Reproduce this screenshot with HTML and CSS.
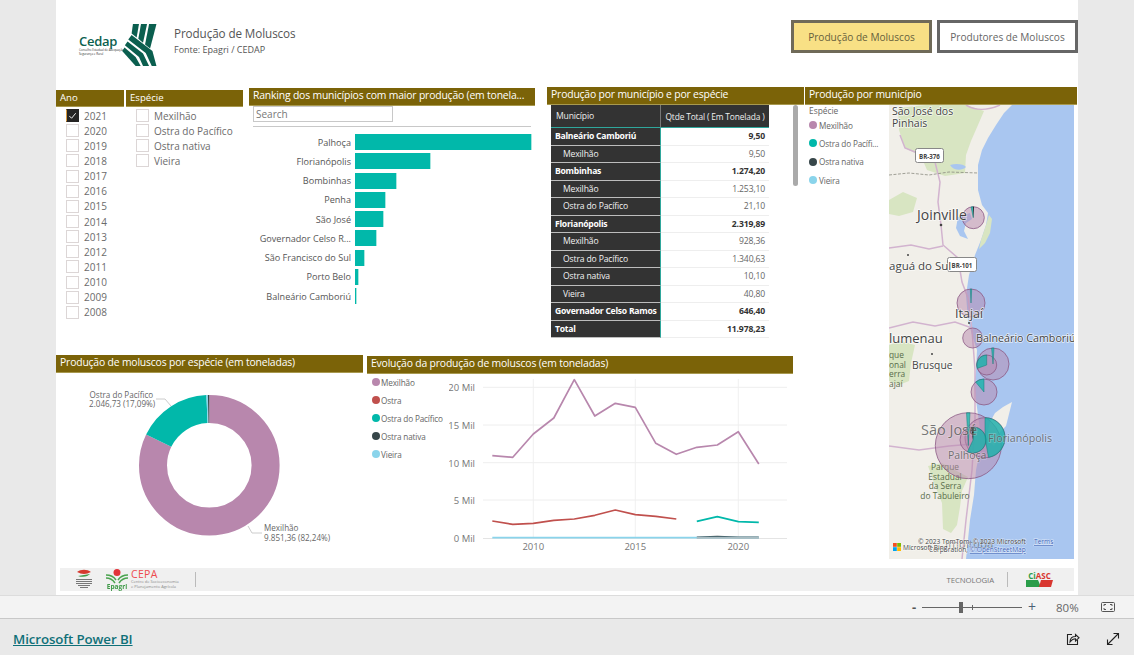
FILE: index.html
```html
<!DOCTYPE html>
<html lang="pt-BR">
<head>
<meta charset="utf-8">
<title>Produção de Moluscos</title>
<link rel="stylesheet" href="styles.css">
</head>
<body>
<main class="stage">
  <div class="canvas">
    <header class="head">
      <div class="brand">
        <div class="brand-text">
          <span class="brand-name">Cedap</span>
          <span class="brand-sub">Conselho Estadual de Adequação<br>Segurança e Rural</span>
        </div>
        <svg class="brand-mark" viewBox="200 72 103 125">
          <g fill="#0b5f4f">
            <path d="M232 72h18l-7 40-15-12z"/>
            <path d="M256 72h18l-12 56-14-12z"/>
            <path d="M280 72h22l-19 73-15-12z"/>
            <path d="M218 118l10-13 62 47 12 45h-14l-18-39z"/>
            <path d="M208 135l8-11 46 36 18 37h-18l-12-27z"/>
            <path d="M200 152l7-10 33 28 15 27h-15z"/>
          </g>
        </svg>
      </div>
      <div class="head-titles">
        <div class="head-title">Produção de Moluscos</div>
        <div class="head-source">Fonte: Epagri / CEDAP</div>
      </div>
      <nav class="tabs">
        <div class="tab tab-active">Produção de Moluscos</div>
        <div class="tab">Produtores de Moluscos</div>
      </nav>
    </header>

    <div class="report">
      <div class="report-left">
        <section class="row-top">
          <div class="slicer slicer-ano">
            <h2 class="bar bar-small">Ano</h2>
            <ul class="checks">
              <li class="check-item"><span class="box box-on"><svg viewBox="0 0 12 12"><path d="M2.5 6.5l2.500 2.500 4.500-5.500" fill="none" stroke="#fff" stroke-width="1"/></svg></span>2021</li>
              <li class="check-item"><span class="box"></span>2020</li>
              <li class="check-item"><span class="box"></span>2019</li>
              <li class="check-item"><span class="box"></span>2018</li>
              <li class="check-item"><span class="box"></span>2017</li>
              <li class="check-item"><span class="box"></span>2016</li>
              <li class="check-item"><span class="box"></span>2015</li>
              <li class="check-item"><span class="box"></span>2014</li>
              <li class="check-item"><span class="box"></span>2013</li>
              <li class="check-item"><span class="box"></span>2012</li>
              <li class="check-item"><span class="box"></span>2011</li>
              <li class="check-item"><span class="box"></span>2010</li>
              <li class="check-item"><span class="box"></span>2009</li>
              <li class="check-item"><span class="box"></span>2008</li>
            </ul>
          </div>
          <div class="slicer slicer-especie">
            <h2 class="bar bar-small">Espécie</h2>
            <ul class="checks">
              <li class="check-item"><span class="box"></span>Mexilhão</li>
              <li class="check-item"><span class="box"></span>Ostra do Pacífico</li>
              <li class="check-item"><span class="box"></span>Ostra nativa</li>
              <li class="check-item"><span class="box"></span>Vieira</li>
            </ul>
          </div>
          <div class="ranking">
            <h2 class="bar">Ranking dos municípios com maior produção (em tonela...</h2>
            <div class="search">Search</div>
            <div class="rule"></div>
            <div class="rank-rows">
              <div class="rank-row"><span class="rank-name">Palhoça</span><span class="rank-bar" style="width:176px"></span></div>
              <div class="rank-row"><span class="rank-name">Florianópolis</span><span class="rank-bar" style="width:75px"></span></div>
              <div class="rank-row"><span class="rank-name">Bombinhas</span><span class="rank-bar" style="width:41px"></span></div>
              <div class="rank-row"><span class="rank-name">Penha</span><span class="rank-bar" style="width:30px"></span></div>
              <div class="rank-row"><span class="rank-name">São José</span><span class="rank-bar" style="width:27.5px"></span></div>
              <div class="rank-row"><span class="rank-name">Governador Celso R...</span><span class="rank-bar" style="width:21px"></span></div>
              <div class="rank-row"><span class="rank-name">São Francisco do Sul</span><span class="rank-bar" style="width:9px"></span></div>
              <div class="rank-row"><span class="rank-name">Porto Belo</span><span class="rank-bar" style="width:3px"></span></div>
              <div class="rank-row"><span class="rank-name">Balneário Camboriú</span><span class="rank-bar" style="width:1px"></span></div>
            </div>
          </div>
          <div class="matrix-wrap">
            <h2 class="bar">Produção por município e por espécie</h2>
            <div class="matrix-body">
              <div class="matrix">
                <div class="mh mh-left">Município</div><div class="mh mh-right">Qtde Total ( Em Tonelada )</div>
                <div class="ml ml-b">Balneário Camboriú</div><div class="mv mv-b">9,50</div>
                <div class="ml">Mexilhão</div><div class="mv">9,50</div>
                <div class="ml ml-b">Bombinhas</div><div class="mv mv-b">1.274,20</div>
                <div class="ml">Mexilhão</div><div class="mv">1.253,10</div>
                <div class="ml">Ostra do Pacífico</div><div class="mv">21,10</div>
                <div class="ml ml-b">Florianópolis</div><div class="mv mv-b">2.319,89</div>
                <div class="ml">Mexilhão</div><div class="mv">928,36</div>
                <div class="ml">Ostra do Pacífico</div><div class="mv">1.340,63</div>
                <div class="ml">Ostra nativa</div><div class="mv">10,10</div>
                <div class="ml">Vieira</div><div class="mv">40,80</div>
                <div class="ml ml-b">Governador Celso Ramos</div><div class="mv mv-b">646,40</div>
                <div class="ml ml-b">Total</div><div class="mv mv-b">11.978,23</div>
              </div>
              <div class="scroll"></div>
            </div>
          </div>
        </section>

        <section class="row-bottom">
          <div class="donut-card">
            <h2 class="bar">Produção de moluscos por espécie (em toneladas)</h2>
            <svg class="donut" viewBox="56 373 307 187">
              <g fill="none" stroke-width="28" transform="rotate(-90 209.3 466.3)">
                <circle cx="209.3" cy="466.3" r="56.3" pathLength="100" stroke="#b887ad" stroke-dasharray="82.24 100"/>
                <circle cx="209.3" cy="466.3" r="56.3" pathLength="100" stroke="#01b8aa" stroke-dasharray="17.09 100" stroke-dashoffset="-82.24"/>
                <circle cx="209.3" cy="466.3" r="56.3" pathLength="100" stroke="#8ad4eb" stroke-dasharray="0.35 100" stroke-dashoffset="-99.33"/>
                <circle cx="209.3" cy="466.3" r="56.3" pathLength="100" stroke="#374649" stroke-dasharray="0.32 100" stroke-dashoffset="-99.68"/>
              </g>
              <path class="leader" d="M156 400h9l6 7"/>
              <path class="leader" d="M248 527l4 7h10"/>
              <text class="dl" x="89.5" y="398.500">Ostra do Pacífico</text>
              <text class="dl" x="89" y="407.500">2.046,73 (17,09%)</text>
              <text class="dl" x="264" y="531.500">Mexilhão</text>
              <text class="dl" x="264" y="541.500">9.851,36 (82,24%)</text>
            </svg>
          </div>
          <div class="line-card">
            <h2 class="bar">Evolução da produção de moluscos (em toneladas)</h2>
            <div class="line-body">
              <ul class="legend legend-line">
                <li class="legend-item"><span class="dot dot-mex"></span>Mexilhão</li>
                <li class="legend-item"><span class="dot dot-ostra"></span>Ostra</li>
                <li class="legend-item"><span class="dot dot-pac"></span>Ostra do Pacífico</li>
                <li class="legend-item"><span class="dot dot-nat"></span>Ostra nativa</li>
                <li class="legend-item"><span class="dot dot-vie"></span>Vieira</li>
              </ul>
              <svg class="line-chart" viewBox="449 374 344 186">
                <g class="grid-v">
                  <path d="M533.3 380V539M635.3 380V539M738.3 380V539"/>
                </g>
                <g class="grid-h">
                  <path d="M483 388.3H787M483 426H787M483 463.7H787M483 501H787"/>
                </g>
                <path class="axis0" d="M483 539.5H787"/>
                <g class="ytick">
                  <text x="475" y="392">20 Mil</text>
                  <text x="475" y="430">15 Mil</text>
                  <text x="475" y="467.5">10 Mil</text>
                  <text x="475" y="505">5 Mil</text>
                  <text x="475" y="542.5">0 Mil</text>
                </g>
                <g class="xtick">
                  <text x="533.3" y="551">2010</text>
                  <text x="635.3" y="551">2015</text>
                  <text x="738.3" y="551">2020</text>
                </g>
                <polyline class="ln ln-mex" points="492.3,456.7 512.8,458.3 533.3,435 553.8,419 574.3,380.7 594.8,417 615.3,404.3 635.3,408.3 655.8,444.3 676.3,455.3 696.8,448.3 717.3,446 738.3,432.7 758.8,465"/>
                <polyline class="ln ln-ostra" points="492.3,522 512.8,525.3 533.3,524.3 553.8,521.3 574.3,520 594.8,516.3 615.3,511 635.3,515.7 655.8,517.3 676.3,520"/>
                <polyline class="ln ln-pac" points="696.8,522.3 717.3,517.7 738.3,522.7 758.8,523.3"/>
                <polyline class="ln ln-nat" points="696.8,538.3 717.3,537.6 738.3,538.3 758.8,538.4"/>
                <polyline class="ln ln-vie" points="492.3,538.7 758.8,538.7"/>
                <polyline class="ln ln-mix" points="696.8,538.8 758.8,538.8"/>
              </svg>
            </div>
          </div>
        </section>
      </div>

      <section class="map-card">
        <h2 class="bar">Produção por município</h2>
        <div class="map-body">
          <ul class="legend legend-map">
            <li class="legend-head">Espécie</li>
            <li class="legend-item"><span class="dot dot-mex"></span>Mexilhão</li>
            <li class="legend-item"><span class="dot dot-pac"></span>Ostra do Pacífi...</li>
            <li class="legend-item"><span class="dot dot-nat"></span>Ostra nativa</li>
            <li class="legend-item"><span class="dot dot-vie"></span>Vieira</li>
          </ul>
          <svg class="map" viewBox="889 105 185 454">
            <rect x="889" y="105" width="185" height="454" fill="#f1efe9"/>
            <path fill="#a9c6f0" d="M1012 105L1004 113L996 125L988 138L982 150L978 165L978 190L982 205L988 213L986 225L981 240L975 255L969 275L966 295L968 320L972 335L977 350L976 370L974 385L976 400L980 430L980 450L976 470L974 495L970 520L966 559H1074V105Z"/>
            <g class="land-green">
              <path d="M898 108l28-3 40 0 18 6-6 14-7 16-5 14-1 18-20 3-18-6-6-14-16-8-6-18z"/>
              <path d="M889 200l14-8 14 6-4 14-14 4-10-2z"/>
              <path d="M981 240l5-15 3-10 3 4-2 14-5 10-6 6z"/>
              <path d="M889 345l12-4 14 4-4 18-2 18-10 4-10-4z"/>
              <path d="M928 466l14-3 26 14-6 14-2 16-3 18-6 8-8-4-1-26-8-20z"/>
            </g>
            <path fill="#f1efe9" d="M990 422l5-9 8-6 9-5-3 12-3 12-6 6-6 14-4-4-2-12z"/>
            <g fill="#a9c6f0">
              <path d="M958 217l12-4 2 6-6 4-2 8 4 8-8-3-4-8z"/>
              <path d="M950 165c6-2 14-1 16 2-4 4-12 4-16-2z"/>
            </g>
            <g class="road">
              <path d="M900 135l5 13 10 4 20 10 5 20-2 20 3 23 2 20 15 13 4 24 6 16 4 32 3 40 0 50-3 50-6 50-4 39"/>
              <path d="M889 248l22-3 18 4 14-3"/>
              <path d="M889 328l24-6 22 4 20-4 17 6"/>
              <path d="M889 446l30 4 30-4 24-2"/>
              <path d="M1000 105c-14 6-24 6-34 0"/>
            </g>
            <path class="border" d="M889 175l20-2 20 2 20-3 29 1"/>
            <g class="pin" fill="#444">
              <circle cx="941" cy="225" r="1.3"/>
              <circle cx="908" cy="255" r="1"/>
              <circle cx="969" cy="323" r="1"/>
              <circle cx="932" cy="354" r="1"/>
            </g>
            <g class="park">
              <text x="889" y="358">que</text>
              <text x="889" y="368">onal</text>
              <text x="889" y="377">erra</text>
              <text x="889" y="387">ajaí</text>
              <text class="mid" x="945" y="470">Parque</text>
              <text class="mid" x="945" y="480">Estadual</text>
              <text class="mid" x="945" y="489">da Serra</text>
              <text class="mid" x="945" y="499">do Tabuleiro</text>
            </g>
            <g class="shield">
              <rect x="915.5" y="148.5" width="28" height="14" rx="2"/>
              <text x="929.5" y="158.5">BR-376</text>
              <rect x="947.5" y="257.5" width="29" height="14" rx="2"/>
              <text x="962" y="267.5">BR-101</text>
            </g>
            <g class="bubble">
              <circle cx="973.3" cy="217.7" r="11"/>
              <circle cx="971" cy="303" r="14"/>
              <circle cx="972.7" cy="338" r="10"/>
              <circle cx="993" cy="364" r="16"/>
              <circle cx="986.7" cy="365" r="10"/>
              <circle cx="984" cy="392" r="13"/>
              <circle cx="968.3" cy="445.7" r="33"/>
              <circle cx="985" cy="437.7" r="20"/>
              <circle cx="973" cy="440" r="13"/>
            </g>
            <g class="wedge">
              <path d="M973.3 217.7L971 206.9A11 11 0 0 1 973.3 206.7Z"/>
              <path d="M971 303L970.3 289L971.7 289Z"/>
              <path d="M993 364L991.6 348L994 348Z"/>
              <path d="M986.7 365L977.3 368.4A10 10 0 0 1 986.7 355Z"/>
              <path d="M984 392L975.6 382A13 13 0 0 1 984 379Z"/>
              <path d="M968.3 445.7L966.5 412.8L970 412.8Z"/>
              <path d="M985 437.7L985 417.7A20 20 0 0 1 988.500 457.4Z"/>
              <path d="M973 440L973 427A13 13 0 1 1 967.5 451.8Z"/>
            </g>
            <g class="wedge-dark">
              <path d="M973.3 217.7L973 206.7L974 206.7Z"/>
              <path d="M973 440L971 427L973.9 427Z"/>
            </g>
            <g class="city">
              <text x="892" y="115" class="c11">São José dos</text>
              <text x="892" y="127" class="c11">Pinhais</text>
              <text x="917" y="220" class="c14">Joinville</text>
              <text x="889" y="270" class="c12">aguá do Sul</text>
              <text x="955" y="318" class="c13">Itajaí</text>
              <text x="889" y="343" class="c13b">lumenau</text>
              <text x="976" y="342" class="c115">Balneário Camboriú</text>
              <text x="912" y="369" class="c103">Brusque</text>
              <text x="921" y="435" class="c15 faded">São José</text>
              <text x="988" y="442" class="c107 faded">Florianópolis</text>
              <text x="948" y="459" class="c11 faded">Palhoça</text>
            </g>
            <text class="ghost" x="945" y="548">Imbituba</text>
            <g class="copy">
              <text x="918" y="544">© 2023 TomTom, © 2023 Microsoft</text>
              <text class="terms" x="1034" y="544">Terms</text>
              <text x="929" y="552">Corporation, <tspan class="terms">© OpenStreetMap</tspan></text>
              <text x="903" y="550">Microsoft Bing</text>
            </g>
            <g>
              <rect x="893" y="543" width="3.8" height="3.8" fill="#f25022"/>
              <rect x="897.2" y="543" width="3.8" height="3.8" fill="#7fba00"/>
              <rect x="893" y="547.2" width="3.8" height="3.8" fill="#00a4ef"/>
              <rect x="897.2" y="547.2" width="3.8" height="3.8" fill="#ffb900"/>
            </g>
          </svg>
        </div>
      </section>
    </div>

    <footer class="strip">
      <div class="strip-logos">
        <svg class="logo-sc" viewBox="0 0 18 22">
          <path d="M2 3c4-3 10-3 14 0-3 1-4 2-7 2S5 4 2 3z" fill="#d63a2f"/>
          <path d="M3 7c4-1 8-1 12-2-2 2-6 4-12 2z" fill="#3f9a48"/>
          <path d="M1 10.500h16M1 12.500h16M1 14.500h16M3 16.500h12M5 18.500h8" stroke="#777" stroke-width="1.200"/>
        </svg>
        <svg class="logo-epagri" viewBox="0 0 24 22">
          <circle cx="12" cy="3.500" r="3.500" fill="#e2333a"/>
          <path d="M1 6c4 0 8 2 10 5M23 6c-4 0-8 2-10 5M1 9c4 0 7 2 9 5M23 9c-4 0-7 2-9 5" fill="none" stroke="#4aa34e" stroke-width="1.500"/>
          <text class="epagri-word" x="12" y="20">Epagri</text>
        </svg>
        <div class="cepa">
          <span class="cepa-name">CEPA</span>
          <span class="cepa-sub">Centro de Socioeconomia<br>e Planejamento Agrícola</span>
        </div>
        <span class="strip-sep"></span>
      </div>
      <div class="strip-right">
        <span class="tecno">TECNOLOGIA</span>
        <span class="strip-sep"></span>
        <div class="ciasc">
          <span class="ciasc-name"><span class="ciasc-c">Ci</span>ASC</span>
          <svg class="ciasc-mark" viewBox="0 0 27 7">
            <path d="M0 0h12l3 7H0z" fill="#2a9d4a"/>
            <path d="M15 0h12l-2 7H13z" fill="#d8362f"/>
          </svg>
        </div>
      </div>
    </footer>
  </div>
</main>

<div class="zoombar">
  <span class="zb-minus">-</span>
  <span class="zb-slider"><span class="zb-tick"></span><span class="zb-thumb"></span></span>
  <span class="zb-plus">+</span>
  <span class="zb-pct">80%</span>
  <svg class="zb-fit" viewBox="0 0 14 10">
    <rect x="0.5" y="0.5" width="13" height="9" rx="1" fill="none" stroke="#555"/>
    <path d="M3 4V2.500h2M11 4V2.500H9M3 6v1.500h2M11 6v1.500H9" fill="none" stroke="#555"/>
  </svg>
</div>

<footer class="pagefoot">
  <a class="pbi-link" href="#">Microsoft Power BI</a>
  <div class="foot-icons">
    <svg class="foot-icon" viewBox="0 0 14 14">
      <path d="M6 2.500H1.500v10h10V8" fill="none" stroke="#222" stroke-width="1.100"/>
      <path d="M4 10c0-4 2.500-5.500 5.500-5.500V2.500L13 5.800 9.500 9V6.800C7 6.800 5.500 8 4 10z" fill="none" stroke="#222" stroke-width="1.100"/>
    </svg>
    <svg class="foot-icon" viewBox="0 0 14 14">
      <path d="M1.500 12.500L12.500 1.500M7.500 1.500h5v5M1.500 7.500v5h5" fill="none" stroke="#222" stroke-width="1.100"/>
    </svg>
  </div>
</footer>
</body>
</html>
```

FILE: styles.css
```css
* { box-sizing: border-box; }
html, body { margin: 0; padding: 0; }
body {
  width: 1134px;
  height: 655px;
  overflow: hidden;
  background: #e9e9e9;
  font-family: "Open Sans", "Noto Sans", sans-serif;
  color: #666;
  display: flex;
  flex-direction: column;
}
ul { list-style: none; margin: 0; padding: 0; }
h2 { margin: 0; font-weight: 400; }

.stage { padding: 0 56px; height: 595px; flex: none; }
.canvas {
  width: 1022px;
  height: 595px;
  background: #fff;
  display: flex;
  flex-direction: column;
}

/* header */
.head { height: 87px; flex: none; display: flex; align-items: flex-start; }
.brand { display: flex; align-items: flex-start; margin: 24px 0 0 23px; }
.brand-text { width: 43px; margin-top: 10px; display: flex; flex-direction: column; }
.brand-name { font: 600 13px/14px "Open Sans", sans-serif; color: #0b5f4f; letter-spacing: -.3px; }
.brand-sub { font-size: 2.900px; line-height: 3.600px; color: #333; white-space: nowrap; margin-top: 1px; }
.brand-mark { width: 35px; height: 42px; }
.head-titles { margin: 26px 0 0 17px; }
.head-title { font-size: 11.700px; line-height: 15px; color: #555; letter-spacing: -.1px; }
.head-source { font-size: 9px; line-height: 17px; color: #555; }
.tabs { margin: 20px 0 0 auto; display: flex; gap: 5px; }
.tab {
  width: 141px;
  height: 33px;
  border: 3px solid #666;
  display: flex;
  align-items: center;
  justify-content: center;
  font-size: 10.100px;
  color: #666;
  background: #fff;
}
.tab-active { background: #f8e085; border-color: #6f6a58; color: #665f3c; }

/* title bars */
.bar {
  height: 17px;
  background: #7b6308;
  color: #fff;
  font-size: 10.400px;
  letter-spacing: -.18px;
  line-height: 15px;
  padding-left: 4px;
  white-space: nowrap;
  overflow: hidden;
  box-shadow: 0 1px 0 #a8994f;
}
.bar-small { height: 16px; font-size: 9.600px; letter-spacing: 0; }

/* report */
.report { display: flex; flex: none; height: 473px; }
.report-left { width: 748px; display: flex; flex-direction: column; }
.row-top { height: 268px; display: flex; align-items: flex-start; }
.row-bottom { height: 205px; display: flex; align-items: flex-start; }

/* slicers */
.slicer { margin-top: 3px; }
.slicer-ano { width: 68px; }
.slicer-especie { width: 117px; margin-left: 2px; }
.checks { margin-top: 2px; padding-left: 10px; }
.check-item {
  height: 15.150px;
  display: flex;
  align-items: center;
  gap: 5px;
  font-size: 10px;
  color: #6b6b6b;
  white-space: nowrap;
}
.box { width: 13px; height: 13px; border: 1px solid #dcd6d6; background: #fff; flex: none; }
.box-on { background: #252423; border-color: #252423; border-left: 1px solid #d99a3c; }
.box-on svg { display: block; width: 11px; height: 11px; }

/* ranking */
.ranking { width: 286px; margin: 1px 0 0 6px; }
.search {
  width: 140px;
  height: 16px;
  margin: 1px 0 0 4px;
  border: 1px solid #c8c8c8;
  font-size: 10px;
  line-height: 14px;
  padding-left: 2px;
  color: #777;
}
.rule { height: 1px; margin: 4px 4px 0 4px; background: #c8c8c8; }
.rank-rows { margin-top: 5.500px; }
.rank-row { height: 19.250px; display: flex; align-items: center; }
.rank-name {
  width: 106px;
  text-align: right;
  padding-right: 4px;
  font-size: 9.100px;
  color: #555;
  white-space: nowrap;
  flex: none;
}
.rank-bar { height: 16px; background: #01b8aa; flex: none; box-shadow: 1px 0 0 #a8e6df; }

/* matrix */
.matrix-wrap { width: 257px; margin-left: 12px; }
.matrix-body { display: flex; align-items: flex-start; }
.matrix {
  margin: 1px 0 0 4px;
  width: 218px;
  display: grid;
  grid-template-columns: 110px 108px;
  grid-template-rows: 23px;
  grid-auto-rows: 17.500px;
  font-size: 8.600px;
  letter-spacing: -.15px;
}
.mh {
  background: #333;
  color: #eee;
  display: flex;
  align-items: center;
  border-bottom: 1px solid #2fa79c;
  white-space: nowrap;
}
.mh-left { padding-left: 5px; border-right: 1px solid #777; }
.mh-right { justify-content: center; font-size: 8.400px; }
.ml {
  background: #333;
  color: #f2f2f2;
  padding-left: 12px;
  display: flex;
  align-items: center;
  border-right: 1px solid #2fa79c;
  border-bottom: 1px solid #bdbdbd;
  white-space: nowrap;
}
.ml-b { padding-left: 4px; font-weight: 700; color: #fff; letter-spacing: -.25px; }
.mv {
  display: flex;
  align-items: center;
  justify-content: flex-end;
  padding-right: 4px;
  border-bottom: 1px solid #eee;
  color: #666;
}
.mv-b { font-weight: 700; color: #333; }
.scroll { width: 5px; height: 81px; margin: 1px 0 0 23.500px; border-radius: 3px; background: #aaa; }

/* donut */
.donut-card { width: 307px; }
.donut { display: block; width: 307px; height: 187px; }
.dl { font-size: 8.100px; fill: #666; }
.leader { fill: none; stroke: #ccc; stroke-width: 1; }

/* line */
.line-card { width: 426px; margin: 1px 0 0 4px; }
.line-body { display: flex; }
.legend-line { width: 82px; padding: 0 0 0 5px; flex: none; }
.legend-line .legend-item { height: 18px; gap: 1px; }
.line-chart { display: block; width: 344px; height: 186px; flex: none; }
.grid-v path { stroke: #f0f0f0; fill: none; }
.grid-h path { stroke: #eee; fill: none; }
.axis0 { stroke: #e4e4e4; fill: none; }
.ytick text { font-size: 9.500px; fill: #777; text-anchor: end; }
.xtick text { font-size: 9.500px; fill: #777; text-anchor: middle; }
.ln { fill: none; stroke-width: 1.700; stroke-linejoin: round; }
.ln-mex { stroke: #b887ad; }
.ln-ostra { stroke: #c0504d; }
.ln-pac { stroke: #01b8aa; }
.ln-nat { stroke: #374649; }
.ln-vie { stroke: #8ad4eb; }
.ln-mix { stroke: #a9bcc2; }

/* legends */
.legend-item {
  display: flex;
  align-items: center;
  gap: 2px;
  font-size: 8.200px;
  letter-spacing: -.15px;
  color: #666;
  white-space: nowrap;
}
.legend-head { font-size: 8.400px; height: 12px; line-height: 13px; color: #666; padding-left: 4px; }
.dot { width: 8px; height: 8px; border-radius: 50%; flex: none; }
.dot-mex { background: #b887ad; }
.dot-ostra { background: #c0504d; }
.dot-pac { background: #01b8aa; }
.dot-nat { background: #374649; }
.dot-vie { background: #8ad4eb; }

/* map */
.map-card { width: 272px; margin-left: 1px; }
.map-body { display: flex; align-items: flex-start; }
.legend-map { width: 84px; flex: none; }
.legend-map .legend-item { height: 18.300px; padding-left: 4px; }
.map { display: block; width: 185px; height: 454px; flex: none; margin-top: 1px; }
.land-green path { fill: #d8e5c2; }
.road { fill: none; stroke: #d2b3cf; stroke-width: 1.500; }
.border { fill: none; stroke: #8a8a80; stroke-width: .8; stroke-dasharray: 3 1.500; }
.city text {
  fill: #444;
  paint-order: stroke;
  stroke: #fff;
  stroke-width: 1.500px;
  stroke-opacity: .7;
}
.city .faded { fill: #555; fill-opacity: .8; stroke-opacity: .25; }
.c11 { font-size: 10.500px; }
.c115 { font-size: 10.700px; }
.c12 { font-size: 11.500px; }
.c13 { font-size: 12.500px; }
.c13b { font-size: 13px; }
.c103 { font-size: 10.300px; }
.c107 { font-size: 10.700px; }
.c14 { font-size: 14px; }
.c15 { font-size: 14.500px; }
.park text { font-size: 8.400px; fill: #586c4a; }
.park .mid { text-anchor: middle; }
.shield rect { fill: #fff; stroke: #888; }
.shield text { font-size: 6.200px; font-weight: 700; fill: #444; text-anchor: middle; }
.bubble circle { fill: #b887ad; fill-opacity: .5; stroke: #8c5b85; stroke-width: .8; }
.wedge path { fill: #01b8aa; fill-opacity: .7; stroke: #157f78; stroke-width: .5; }
.wedge-dark path { fill: #222; }
.ghost { font-size: 11.500px; fill: #666; fill-opacity: .7; }
.copy text { font-size: 6.600px; fill: #444; paint-order: stroke; stroke: #fff; stroke-width: 1px; stroke-opacity: .6; }
.copy .terms { fill: #3a63b8; text-decoration: underline; }

/* bottom strip */
.strip {
  height: 23px;
  margin: 8px 4px 0 4px;
  flex: none;
  background: #f0f0f0;
  display: flex;
  justify-content: space-between;
  align-items: center;
}
.strip-logos { display: flex; align-items: center; }
.logo-sc { width: 18px; height: 22px; margin-left: 15px; filter: blur(.4px); }
.logo-epagri { width: 24px; height: 22px; margin-left: 12px; filter: blur(.2px); }
.epagri-word { font-size: 6.500px; font-weight: 700; fill: #3f9a48; text-anchor: middle; }
.cepa { display: flex; flex-direction: column; margin-left: 2px; width: 64px; }
.cepa-name { font-size: 10.500px; line-height: 11px; font-weight: 400; color: #ee4a4f; letter-spacing: .3px; }
.cepa-sub { font-size: 4px; line-height: 4.600px; color: #888; white-space: nowrap; }
.strip-sep { width: 1px; height: 15px; background: #bbb; flex: none; }
.strip-right { display: flex; align-items: center; gap: 13px; padding-right: 21px; }
.tecno { font-size: 7.800px; color: #777; letter-spacing: -.1px; }
.ciasc { display: flex; flex-direction: column; width: 27px; margin-left: 5px; align-items: center; }
.ciasc-name { font-size: 8px; line-height: 8px; font-weight: 700; color: #d8362f; }
.ciasc-c { color: #2a9d4a; }
.ciasc-mark { width: 27px; height: 7px; display: block; }

/* zoom bar */
.zoombar {
  height: 24px;
  flex: none;
  background: #f3f3f3;
  border-top: 1px solid #dcdcdc;
  border-bottom: 1px solid #c8c8c8;
  display: flex;
  align-items: center;
  padding-left: 912px;
  color: #555;
}
.zb-minus { width: 10px; font-size: 13px; font-weight: 700; line-height: 14px; color: #555; }
.zb-slider { position: relative; width: 100px; height: 1px; background: #666; }
.zb-thumb { position: absolute; left: 37px; top: -5px; width: 4px; height: 11px; background: #666; }
.zb-tick { position: absolute; left: 50px; top: -2px; width: 1px; height: 5px; background: #666; }
.zb-plus { width: 21px; margin-left: 6px; font-size: 14px; line-height: 14px; color: #4c6075; }
.zb-pct { width: 45px; margin-left: 7px; font-size: 11.500px; color: #666; }
.zb-fit { width: 14px; height: 10px; }

/* page footer */
.pagefoot { flex: 1; display: flex; align-items: center; justify-content: space-between; padding: 3px 14px 0 13px; }
.pbi-link { font-size: 13.300px; font-weight: 600; color: #0f7078; letter-spacing: -.1px; }
.foot-icons { display: flex; gap: 26px; }
.foot-icon { width: 14px; height: 14px; display: block; }
```
